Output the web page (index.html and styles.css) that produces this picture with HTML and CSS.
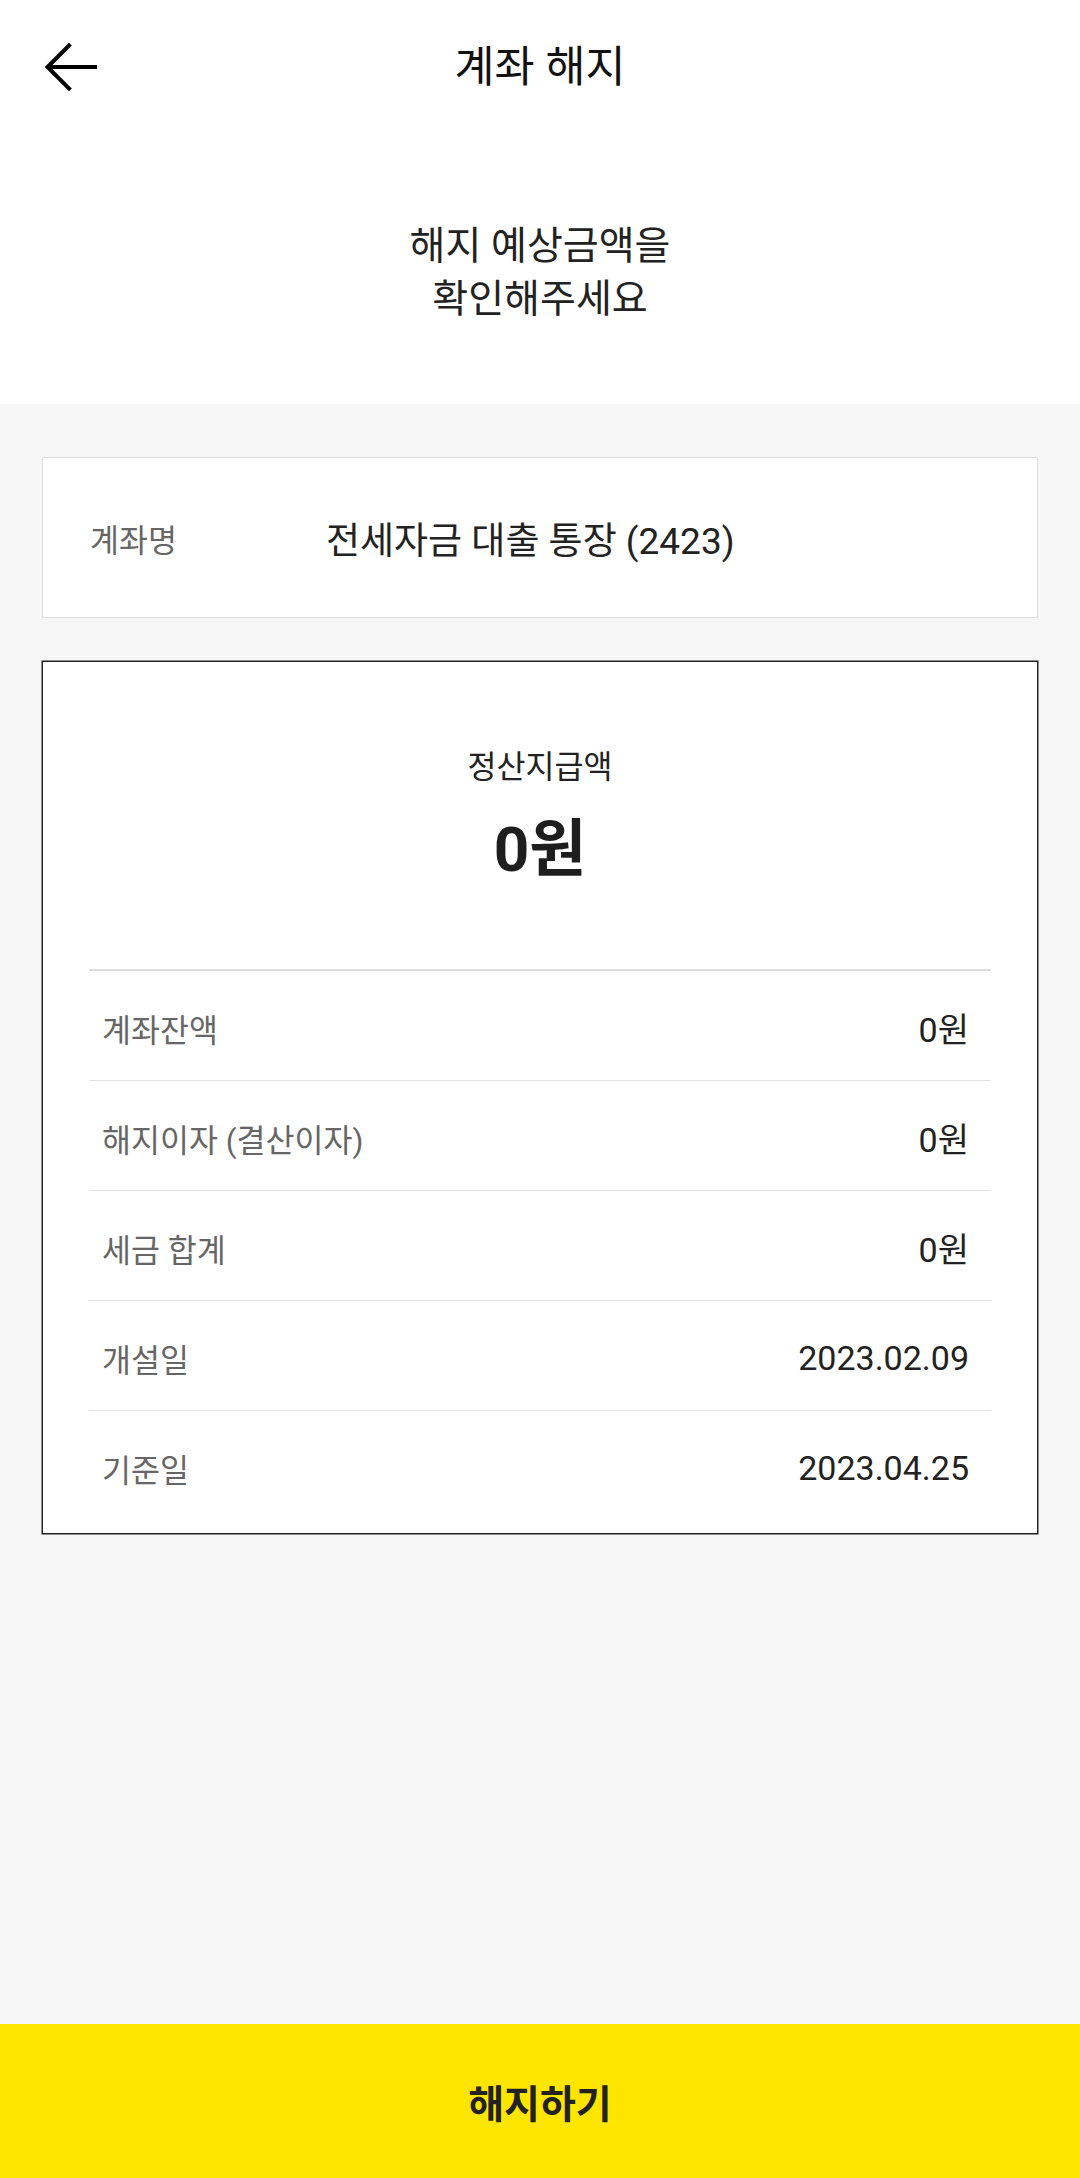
FILE: index.html
```html
<!DOCTYPE html>
<html lang="ko">
<head>
<meta charset="utf-8">
<title>계좌 해지</title>
<link rel="stylesheet" href="styles.css">
</head>
<body>
<div class="page">
  <header class="topbar">
    <button class="back" aria-label="뒤로">
      <svg width="56" height="50" viewBox="0 0 56 50" fill="none" stroke="#000" stroke-width="4">
        <path d="M54 24H4" stroke-linecap="butt"/>
        <path d="M26 2.5L4.5 24L26 45.5" stroke-linecap="square" stroke-linejoin="miter"/>
      </svg>
    </button>
    <h1 class="title">계좌 해지</h1>
  </header>
  <section class="intro">
    <p class="intro-text">해지 예상금액을<br>확인해주세요</p>
  </section>
  <main class="content">
    <div class="account-card">
      <span class="account-label">계좌명</span>
      <span class="account-value">전세자금 대출 통장 (2423)</span>
    </div>
    <div class="summary-card">
      <div class="summary-head">
        <div class="summary-label">정산지급액</div>
        <div class="summary-amount">0원</div>
      </div>
      <ul class="detail-list">
        <li class="detail-row"><span class="detail-label">계좌잔액</span><span class="detail-value">0원</span></li>
        <li class="detail-row"><span class="detail-label">해지이자 (결산이자)</span><span class="detail-value">0원</span></li>
        <li class="detail-row"><span class="detail-label">세금 합계</span><span class="detail-value">0원</span></li>
        <li class="detail-row"><span class="detail-label">개설일</span><span class="detail-value">2023.02.09</span></li>
        <li class="detail-row"><span class="detail-label">기준일</span><span class="detail-value">2023.04.25</span></li>
      </ul>
    </div>
  </main>
  <button class="cta">해지하기</button>
</div>
</body>
</html>
```

FILE: styles.css
```css
* { box-sizing: border-box; }
html, body {
  margin: 0;
  padding: 0;
  background: #f6f6f6;
}
body {
  font-family: Roboto, "Noto Sans CJK KR", sans-serif;
  color: #222;
}
.page {
  min-height: 100vh;
  display: flex;
  flex-direction: column;
}
.topbar {
  position: relative;
  height: 136px;
  background: #fff;
  display: flex;
  justify-content: center;
  align-items: center;
}
.back {
  position: absolute;
  left: 43px;
  top: 43px;
  padding: 0;
  border: 0;
  background: none;
  width: 56px;
  height: 50px;
  display: block;
}
.back svg { display: block; }
.title {
  margin: 0;
  font-size: 43.5px;
  font-weight: 400;
  line-height: 136px;
  color: #111;
}
.intro {
  background: #fff;
  padding: 84px 0 78px;
  text-align: center;
}
.intro-text {
  margin: 0;
  font-size: 39px;
  line-height: 53px;
  color: #222;
}
.content {
  flex: 1;
  padding: 53px 42px 0;
}
.account-card {
  height: 161px;
  background: #fff;
  border: 1px solid #dedede;
  display: flex;
  align-items: center;
  padding: 0 0 0 47px;
}
.account-label {
  width: 236px;
  flex: none;
  font-size: 31.5px;
  color: #666;
}
.account-value {
  font-size: 37px;
  color: #222;
}
.summary-card {
  margin-top: 43px;
  background: #fff;
  border: 1px solid #222;
  box-shadow: 0 0 0 0.5px #222;
  padding: 86px 46px 12px;
}
.summary-head {
  text-align: center;
  padding-bottom: 84px;
  border-bottom: 2px solid #dcdcdc;
}
.summary-label {
  font-size: 31.5px;
  line-height: 40px;
  color: #222;
}
.summary-amount {
  margin-top: 27px;
  font-size: 62px;
  line-height: 70px;
  font-weight: 700;
  color: #1e1e1e;
}
.detail-list {
  list-style: none;
  margin: 0;
  padding: 0;
}
.detail-row {
  height: 110px;
  display: flex;
  align-items: center;
  justify-content: space-between;
  padding: 4px 22px 0 13px;
  border-bottom: 1px solid #e3e3e3;
}
.detail-row:last-child {
  border-bottom: 0;
}
.detail-label {
  font-size: 31.5px;
  color: #666;
}
.detail-value {
  font-size: 34px;
  color: #222;
}
.cta {
  display: block;
  width: 100%;
  height: 154px;
  border: 0;
  margin: 0;
  background: #fee500;
  font-family: Roboto, "Noto Sans CJK KR", sans-serif;
  font-size: 39px;
  font-weight: 700;
  color: #222;
  padding: 0;
}
```
